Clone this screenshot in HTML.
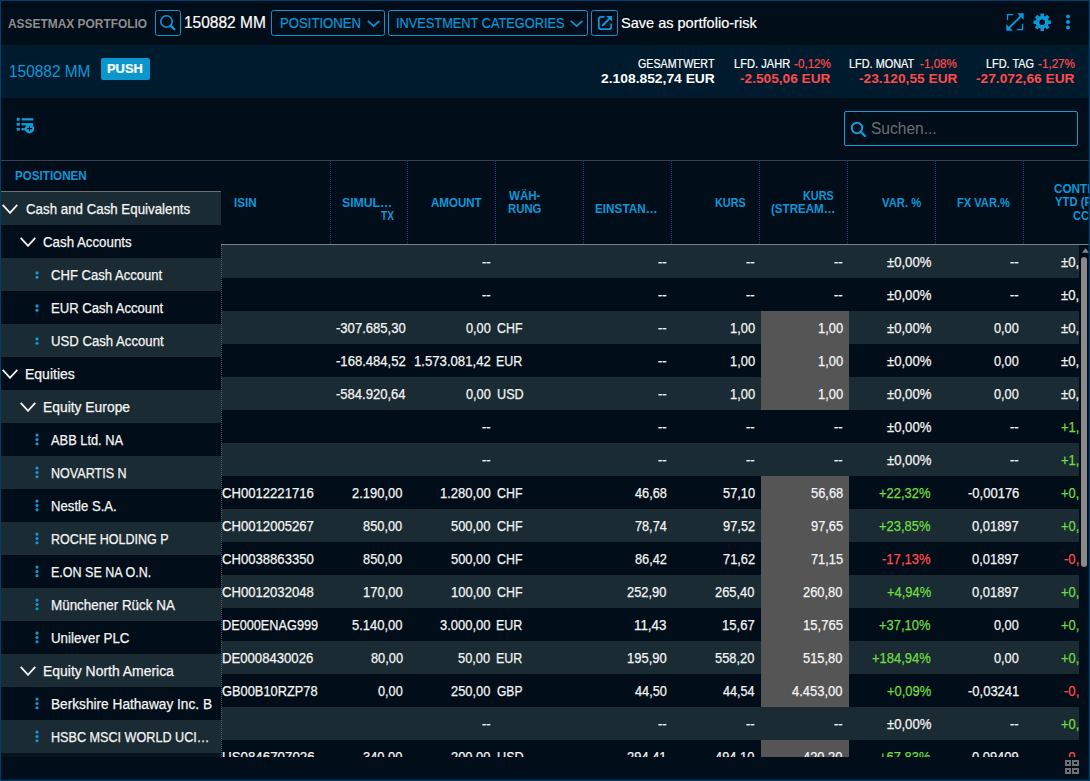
<!DOCTYPE html>
<html lang="de"><head><meta charset="utf-8"><title>Assetmax Portfolio</title>
<style>
*{box-sizing:border-box;margin:0;padding:0}
html,body{width:1090px;height:781px;overflow:hidden;background:#010d18}
body{font-family:"Liberation Sans",sans-serif;color:#f2f2f2;font-size:14px}
#app{position:relative;width:1090px;height:781px;background:#010d18;overflow:hidden}
#app:after{content:"";position:absolute;left:0;top:0;right:0;bottom:0;border:1px solid #003f6c;box-shadow:inset -1px -1px 0 rgba(0,63,108,.3);pointer-events:none;z-index:50}
.abs{position:absolute}
.t{position:absolute;white-space:pre;transform-origin:0 50%;display:block}
.white{color:#fff;-webkit-text-stroke:0.2px}
.blue{color:#0998d8}
.red{color:#ff4a4a}
.titlebar{position:absolute;left:1px;top:1px;width:1088px;height:44px;background:#010d18}
.wtitle{top:0.2px;line-height:45px;font-weight:700;color:#8e8e8e}
.btn{position:absolute;top:9px;height:26px;border:1px solid #0a93d2;border-radius:2.5px}
.btn .ic{position:absolute}
.btxt{top:0;line-height:25px;color:#0998d8;-webkit-text-stroke:0.2px}
.chev{position:absolute;top:9.2px}
.summary{position:absolute;left:1px;top:45px;width:1088px;height:53px;background:#011b2e}
.push{position:absolute;left:100px;top:13px;width:49px;height:22px;background:#0b96cd;border-radius:2px}
.kpi{position:absolute;left:0;top:0}
.k1{top:12px;line-height:15px;color:#fff;-webkit-text-stroke:0.2px}
.k2{top:24.6px;line-height:17px;font-weight:700;color:#fff}
.k1.red,.k2.red{color:#ff4a4a}
.toolbar{position:absolute;left:1px;top:98px;width:1088px;height:62px}
.search{position:absolute;left:843px;top:13px;width:234px;height:35px;border:1px solid #149bd3;border-radius:2px}
.ph{color:#6d6d6d}
.grid{position:absolute;left:1px;top:160px;width:1088px;height:597px;border-top:1px solid #36404f;overflow:hidden}
.pinned{position:absolute;left:0;top:0;width:220px;height:596px;overflow:hidden;z-index:3;background:#010d18}
.phead{position:relative;height:31px;border-bottom:1px solid #707070;font-weight:700;color:#0998d8}
.prow{position:relative;height:33px;line-height:33px}
.prow.alt,.mrow.alt{background:#1b2b33}
.ptxt{top:1px;color:#f4f4f4;-webkit-text-stroke:0.25px #f4f4f4}
.pchev{position:absolute;top:11.5px}
.pdots{position:absolute;left:33.5px}
.pstub{height:4px;background:#07131e}
.mhead{position:absolute;left:220px;top:0;width:868px;height:84px;border-bottom:1px solid #808080;overflow:hidden}
.sep{position:absolute;top:0;width:0;height:83px;border-left:1px dotted #0e4468}
.htxt{line-height:14px;font-weight:700;color:#0998d8}
.mbody{position:absolute;left:220px;top:84px;width:858px;height:512px;overflow:hidden}
.mbody:after{content:"";position:absolute;left:0;top:0;height:512px;width:0;border-left:1px dotted #4f5962}
.mrow{position:relative;height:33px;line-height:33px}
.c{top:1px;color:#f4f4f4;-webkit-text-stroke:0.25px}
.c.g{color:#6fdc42}
.c.r{color:#ff4a4a}
.hl{position:absolute;left:540px;top:0;width:88px;height:33px;background:#555}
.vscroll{position:absolute;left:1078px;top:84px;width:10px;height:512px;background:#010d18}
.thumb{position:absolute;left:2px;top:11.5px;width:6px;height:310px;border-radius:3px;background:#8a8a8a}
.footer{position:absolute;left:1px;top:757px;width:1088px;height:22px;background:#010d18}

</style></head>
<body>
<div id="app">
<div class="titlebar">
<span class="t wtitle" style="font-size:13px;left:7.30px;transform:scaleX(0.917);">ASSETMAX PORTFOLIO</span>
<div class="btn" style="left:154px;width:26px"><svg class="ic" style="left:3px;top:3px" width="18" height="18" viewBox="0 0 18 18"><circle cx="7.5" cy="7.5" r="5.7" fill="none" stroke="#0998d8" stroke-width="1.6"/><path d="M11.6 11.6 L15.4 15.3" stroke="#0998d8" stroke-width="2.2" stroke-linecap="round"/></svg></div>
<span class="t white" style="font-size:16px;left:183.31px;transform:scaleX(0.968);top:0;line-height:44px">150882 MM</span>
<div class="btn" style="left:270px;width:114px"><span class="t btxt" style="font-size:14px;left:7.73px;transform:scaleX(0.939);">POSITIONEN</span><svg class="chev" style="left:95px" width="14" height="8" viewBox="0 0 14 8"><path d="M0.8 0.8 L6.6 6.2 L12.4 0.8" fill="none" stroke="#0998d8" stroke-width="1.6"/></svg></div>
<div class="btn" style="left:387px;width:200px"><span class="t btxt" style="font-size:14px;left:7.31px;transform:scaleX(0.913);">INVESTMENT CATEGORIES</span><svg class="chev" style="left:181px" width="14" height="8" viewBox="0 0 14 8"><path d="M0.8 0.8 L6.6 6.2 L12.4 0.8" fill="none" stroke="#0998d8" stroke-width="1.6"/></svg></div>
<div class="btn" style="left:590px;width:27px"><svg class="ic" style="left:4px;top:3px" width="18" height="18" viewBox="0 0 18 18"><path d="M8.5 2.8 H5 a2.2 2.2 0 0 0 -2.2 2.2 V13 a2.2 2.2 0 0 0 2.2 2.2 H13 a2.2 2.2 0 0 0 2.2 -2.2 V9.5" fill="none" stroke="#0998d8" stroke-width="1.8"/><path d="M6.8 11.3 L13.5 4.6" stroke="#0998d8" stroke-width="2" stroke-linecap="round"/><path d="M10.2 2 H16 V7.8 Z" fill="#0998d8"/></svg></div>
<span class="t white" style="font-size:14.5px;left:620.07px;transform:scaleX(1.002);top:0;line-height:44px">Save as portfolio-risk</span>
<svg class="abs" style="left:1005px;top:12px" width="18" height="18" viewBox="0 0 18 18"><g fill="none" stroke="#0998d8"><path d="M1.5 7.2 V1.6 H7.2" stroke-width="1.3"/><path d="M16.6 10.8 V16.6 H10.8" stroke-width="1.3"/><path d="M2.5 15.5 L15.5 2.5" stroke-width="1.9"/></g><path d="M11.2 0.3 H17.7 V6.8 Z" fill="#0998d8"/><path d="M0.3 11.2 V17.7 H6.8 Z" fill="#0998d8"/></svg>
<svg class="abs" style="left:1031.8px;top:11.8px" width="18.4" height="18.4" viewBox="-9.5 -9.5 19 19"><path d="M-1.77 -6.46 L-1.79 -9.02 L1.79 -9.02 L1.77 -6.46 L3.32 -5.82 L5.11 -7.65 L7.65 -5.11 L5.82 -3.32 L6.46 -1.77 L9.02 -1.79 L9.02 1.79 L6.46 1.77 L5.82 3.32 L7.65 5.11 L5.11 7.65 L3.32 5.82 L1.77 6.46 L1.79 9.02 L-1.79 9.02 L-1.77 6.46 L-3.32 5.82 L-5.11 7.65 L-7.65 5.11 L-5.82 3.32 L-6.46 1.77 L-9.02 1.79 L-9.02 -1.79 L-6.46 -1.77 L-5.82 -3.32 L-7.65 -5.11 L-5.11 -7.65 L-3.32 -5.82 Z M2.9 0 A2.9 2.9 0 1 0 -2.9 0 A2.9 2.9 0 1 0 2.9 0 Z" fill="#0998d8" fill-rule="evenodd"/></svg>
<svg class="abs" style="left:1064px;top:13px" width="6" height="16" viewBox="0 0 6 16"><circle cx="3" cy="2.6" r="2" fill="#0998d8"/><circle cx="3" cy="8.1" r="2" fill="#0998d8"/><circle cx="3" cy="13.5" r="2" fill="#0998d8"/></svg>
</div>
<div class="summary">
<span class="t blue" style="font-size:16.5px;left:7.55px;transform:scaleX(0.935);top:-0.5px;line-height:53px">150882 MM</span>
<i class="push"></i><span class="t white" style="font-size:12px;left:106.14px;transform:scaleX(1.073);top:13.6px;line-height:21px;font-weight:700">PUSH</span>
<div class="kpi"><span class="t k1" style="font-size:12px;left:636.68px;transform:scaleX(0.891);">GESAMTWERT</span><span class="t k2" style="font-size:13.5px;left:599.70px;transform:scaleX(1.025);">2.108.852,74 EUR</span></div>
<div class="kpi"><span class="t k1" style="font-size:12px;left:732.96px;transform:scaleX(0.926);">LFD. JAHR</span><span class="t k1 red" style="font-size:12px;left:792.50px;transform:scaleX(0.973);">-0,12%</span><span class="t k2 red" style="font-size:13.5px;left:739.30px;transform:scaleX(1.012);">-2.505,06 EUR</span></div>
<div class="kpi"><span class="t k1" style="font-size:12px;left:848.26px;transform:scaleX(0.909);">LFD. MONAT</span><span class="t k1 red" style="font-size:12px;left:919.00px;transform:scaleX(0.973);">-1,08%</span><span class="t k2 red" style="font-size:13.5px;left:857.60px;transform:scaleX(1.018);">-23.120,55 EUR</span></div>
<div class="kpi"><span class="t k1" style="font-size:12px;left:984.66px;transform:scaleX(0.907);">LFD. TAG</span><span class="t k1 red" style="font-size:12px;left:1036.50px;transform:scaleX(0.973);">-1,27%</span><span class="t k2 red" style="font-size:13.5px;left:975.00px;transform:scaleX(1.018);">-27.072,66 EUR</span></div>
</div>
<div class="toolbar">
<svg class="abs" style="left:15px;top:17.6px" width="20" height="20" viewBox="0 0 20 20"><g fill="#0f9cd8"><rect x="0.7" y="1.8" width="3" height="3" rx=".6"/><rect x="0.7" y="6.7" width="3" height="3" rx=".6"/><rect x="0.7" y="11.7" width="3" height="3" rx=".6"/><rect x="5.6" y="2.2" width="11.7" height="2.3"/><rect x="5.6" y="7.1" width="11.7" height="2.3"/><rect x="5.6" y="12.1" width="4" height="2.3"/><circle cx="13.5" cy="12.7" r="4.7"/></g><path d="M13.5 10.2 V15.2 M11 12.7 H16" stroke="#010d18" stroke-width="1.2"/></svg>
<div class="search"><svg class="abs" style="left:5px;top:9px" width="17" height="17" viewBox="0 0 17 17"><circle cx="7" cy="7" r="5.2" fill="none" stroke="#149bd3" stroke-width="2"/><path d="M10.8 10.8 L15 15" stroke="#149bd3" stroke-width="2.4" stroke-linecap="round"/></svg><span class="t ph" style="font-size:16px;left:26.36px;transform:scaleX(0.971);top:0;line-height:33px">Suchen...</span></div>
</div>
<div class="grid">
<div class="pinned">
<div class="phead"><span class="t" style="font-size:12px;left:13.62px;transform:scaleX(0.969);top:1px;line-height:29px">POSITIONEN</span></div>
<div class="prow alt"><svg class="pchev" style="left:1.3px" width="16" height="10" viewBox="0 0 16 10"><path d="M0.7 0.9 L8 8.8 L15.3 0.9" fill="none" stroke="#f4f4f4" stroke-width="1.8"/></svg><span class="t ptxt" style="font-size:14px;left:24.90px;transform:scaleX(0.950);">Cash and Cash Equivalents</span></div>
<div class="prow"><svg class="pchev" style="left:18.5px" width="16" height="10" viewBox="0 0 16 10"><path d="M0.7 0.9 L8 8.8 L15.3 0.9" fill="none" stroke="#f4f4f4" stroke-width="1.8"/></svg><span class="t ptxt" style="font-size:14px;left:42.30px;transform:scaleX(0.949);">Cash Accounts</span></div>
<div class="prow alt"><svg class="pdots" style="top:12.5px" width="4" height="8" viewBox="0 0 4 8"><circle cx="2" cy="1.9" r="1.55" fill="#129bd2"/><circle cx="2" cy="6.2" r="1.55" fill="#129bd2"/></svg><span class="t ptxt" style="font-size:14px;left:50.30px;transform:scaleX(0.934);">CHF Cash Account</span></div>
<div class="prow"><svg class="pdots" style="top:12.5px" width="4" height="8" viewBox="0 0 4 8"><circle cx="2" cy="1.9" r="1.55" fill="#129bd2"/><circle cx="2" cy="6.2" r="1.55" fill="#129bd2"/></svg><span class="t ptxt" style="font-size:14px;left:49.83px;transform:scaleX(0.935);">EUR Cash Account</span></div>
<div class="prow alt"><svg class="pdots" style="top:12.5px" width="4" height="8" viewBox="0 0 4 8"><circle cx="2" cy="1.9" r="1.55" fill="#129bd2"/><circle cx="2" cy="6.2" r="1.55" fill="#129bd2"/></svg><span class="t ptxt" style="font-size:14px;left:49.90px;transform:scaleX(0.940);">USD Cash Account</span></div>
<div class="prow"><svg class="pchev" style="left:1.3px" width="16" height="10" viewBox="0 0 16 10"><path d="M0.7 0.9 L8 8.8 L15.3 0.9" fill="none" stroke="#f4f4f4" stroke-width="1.8"/></svg><span class="t ptxt" style="font-size:14px;left:24.35px;transform:scaleX(0.999);">Equities</span></div>
<div class="prow alt"><svg class="pchev" style="left:18.5px" width="16" height="10" viewBox="0 0 16 10"><path d="M0.7 0.9 L8 8.8 L15.3 0.9" fill="none" stroke="#f4f4f4" stroke-width="1.8"/></svg><span class="t ptxt" style="font-size:14px;left:41.75px;transform:scaleX(0.990);">Equity Europe</span></div>
<div class="prow"><svg class="pdots" style="top:10px" width="4" height="13" viewBox="0 0 4 13"><circle cx="2" cy="2.1" r="1.55" fill="#129bd2"/><circle cx="2" cy="6.5" r="1.55" fill="#129bd2"/><circle cx="2" cy="10.8" r="1.55" fill="#129bd2"/></svg><span class="t ptxt" style="font-size:14px;left:50.40px;transform:scaleX(0.917);">ABB Ltd. NA</span></div>
<div class="prow alt"><svg class="pdots" style="top:10px" width="4" height="13" viewBox="0 0 4 13"><circle cx="2" cy="2.1" r="1.55" fill="#129bd2"/><circle cx="2" cy="6.5" r="1.55" fill="#129bd2"/><circle cx="2" cy="10.8" r="1.55" fill="#129bd2"/></svg><span class="t ptxt" style="font-size:14px;left:49.87px;transform:scaleX(0.897);">NOVARTIS N</span></div>
<div class="prow"><svg class="pdots" style="top:10px" width="4" height="13" viewBox="0 0 4 13"><circle cx="2" cy="2.1" r="1.55" fill="#129bd2"/><circle cx="2" cy="6.5" r="1.55" fill="#129bd2"/><circle cx="2" cy="10.8" r="1.55" fill="#129bd2"/></svg><span class="t ptxt" style="font-size:14px;left:49.83px;transform:scaleX(0.939);">Nestle S.A.</span></div>
<div class="prow alt"><svg class="pdots" style="top:10px" width="4" height="13" viewBox="0 0 4 13"><circle cx="2" cy="2.1" r="1.55" fill="#129bd2"/><circle cx="2" cy="6.5" r="1.55" fill="#129bd2"/><circle cx="2" cy="10.8" r="1.55" fill="#129bd2"/></svg><span class="t ptxt" style="font-size:14px;left:49.87px;transform:scaleX(0.895);">ROCHE HOLDING P</span></div>
<div class="prow"><svg class="pdots" style="top:10px" width="4" height="13" viewBox="0 0 4 13"><circle cx="2" cy="2.1" r="1.55" fill="#129bd2"/><circle cx="2" cy="6.5" r="1.55" fill="#129bd2"/><circle cx="2" cy="10.8" r="1.55" fill="#129bd2"/></svg><span class="t ptxt" style="font-size:14px;left:49.87px;transform:scaleX(0.895);">E.ON SE NA O.N.</span></div>
<div class="prow alt"><svg class="pdots" style="top:10px" width="4" height="13" viewBox="0 0 4 13"><circle cx="2" cy="2.1" r="1.55" fill="#129bd2"/><circle cx="2" cy="6.5" r="1.55" fill="#129bd2"/><circle cx="2" cy="10.8" r="1.55" fill="#129bd2"/></svg><span class="t ptxt" style="font-size:14px;left:49.79px;transform:scaleX(0.959);">Münchener Rück NA</span></div>
<div class="prow"><svg class="pdots" style="top:10px" width="4" height="13" viewBox="0 0 4 13"><circle cx="2" cy="2.1" r="1.55" fill="#129bd2"/><circle cx="2" cy="6.5" r="1.55" fill="#129bd2"/><circle cx="2" cy="10.8" r="1.55" fill="#129bd2"/></svg><span class="t ptxt" style="font-size:14px;left:49.87px;transform:scaleX(0.951);">Unilever PLC</span></div>
<div class="prow alt"><svg class="pchev" style="left:18.5px" width="16" height="10" viewBox="0 0 16 10"><path d="M0.7 0.9 L8 8.8 L15.3 0.9" fill="none" stroke="#f4f4f4" stroke-width="1.8"/></svg><span class="t ptxt" style="font-size:14px;left:41.75px;transform:scaleX(0.995);">Equity North America</span></div>
<div class="prow"><svg class="pdots" style="top:10px" width="4" height="13" viewBox="0 0 4 13"><circle cx="2" cy="2.1" r="1.55" fill="#129bd2"/><circle cx="2" cy="6.5" r="1.55" fill="#129bd2"/><circle cx="2" cy="10.8" r="1.55" fill="#129bd2"/></svg><span class="t ptxt" style="font-size:14px;left:49.79px;transform:scaleX(0.976);">Berkshire Hathaway Inc. B</span></div>
<div class="prow alt"><svg class="pdots" style="top:10px" width="4" height="13" viewBox="0 0 4 13"><circle cx="2" cy="2.1" r="1.55" fill="#129bd2"/><circle cx="2" cy="6.5" r="1.55" fill="#129bd2"/><circle cx="2" cy="10.8" r="1.55" fill="#129bd2"/></svg><span class="t ptxt" style="font-size:14px;left:49.87px;transform:scaleX(0.901);">HSBC MSCI WORLD UCI…</span></div>
<div class="pstub"></div>
</div>
<div class="mhead">
<i class="sep" style="left:109px"></i><i class="sep" style="left:186px"></i><i class="sep" style="left:274px"></i><i class="sep" style="left:362px"></i><i class="sep" style="left:450px"></i><i class="sep" style="left:538px"></i><i class="sep" style="left:626px"></i><i class="sep" style="left:714px"></i><i class="sep" style="left:802px"></i>
<span class="t htxt" style="font-size:12.5px;left:13.08px;transform:scaleX(0.938);top:34.5px">ISIN</span>
<span class="t htxt" style="font-size:12.5px;left:121.02px;transform:scaleX(0.978);top:34.5px">SIMUL…</span>
<span class="t htxt" style="font-size:12.5px;left:160.00px;transform:scaleX(0.811);top:47.5px">TX</span>
<span class="t htxt" style="font-size:12.5px;left:209.50px;transform:scaleX(0.922);top:34.5px">AMOUNT</span>
<span class="t htxt" style="font-size:12.5px;left:288.00px;transform:scaleX(0.924);top:28px">WÄH-</span>
<span class="t htxt" style="font-size:12.5px;left:287.12px;transform:scaleX(0.908);top:41px">RUNG</span>
<span class="t htxt" style="font-size:12.5px;left:374.28px;transform:scaleX(0.940);top:41px">EINSTAN…</span>
<span class="t htxt" style="font-size:12.5px;left:493.86px;transform:scaleX(0.867);top:34.5px">KURS</span>
<span class="t htxt" style="font-size:12.5px;left:582.36px;transform:scaleX(0.867);top:28px">KURS</span>
<span class="t htxt" style="font-size:12.5px;left:550.48px;transform:scaleX(0.926);top:41px">(STREAM…</span>
<span class="t htxt" style="font-size:12.5px;left:661.00px;transform:scaleX(0.900);top:34.5px">VAR. %</span>
<span class="t htxt" style="font-size:12.5px;left:735.86px;transform:scaleX(0.889);top:34.5px">FX VAR.%</span>
<span class="t htxt" style="font-size:12.5px;left:833.30px;transform:scaleX(0.938);top:21px">CONTRIBUTION</span>
<span class="t htxt" style="font-size:12.5px;left:833.90px;transform:scaleX(0.901);top:34px">YTD (PORTFOLIO</span>
<span class="t htxt" style="font-size:12.5px;left:851.50px;transform:scaleX(0.886);top:47.5px">CCY)</span>
</div>
<div class="mbody">
<div class="mrow alt"><span class="t c" style="font-size:14px;left:261.00px;transform:scaleX(0.923);">--</span><span class="t c" style="font-size:14px;left:437.20px;transform:scaleX(0.923);">--</span><span class="t c" style="font-size:14px;left:525.20px;transform:scaleX(0.923);">--</span><span class="t c" style="font-size:14px;left:613.20px;transform:scaleX(0.923);">--</span><span class="t c" style="font-size:14px;left:665.68px;transform:scaleX(0.935);">±0,00%</span><span class="t c" style="font-size:14px;left:789.30px;transform:scaleX(0.923);">--</span><span class="t c" style="font-size:14px;left:840.48px;transform:scaleX(0.935);">±0,00%</span></div>
<div class="mrow"><span class="t c" style="font-size:14px;left:261.00px;transform:scaleX(0.923);">--</span><span class="t c" style="font-size:14px;left:437.20px;transform:scaleX(0.923);">--</span><span class="t c" style="font-size:14px;left:525.20px;transform:scaleX(0.923);">--</span><span class="t c" style="font-size:14px;left:613.20px;transform:scaleX(0.923);">--</span><span class="t c" style="font-size:14px;left:665.68px;transform:scaleX(0.935);">±0,00%</span><span class="t c" style="font-size:14px;left:789.30px;transform:scaleX(0.923);">--</span><span class="t c" style="font-size:14px;left:840.48px;transform:scaleX(0.935);">±0,00%</span></div>
<div class="mrow alt"><span class="t c" style="font-size:14px;left:115.31px;transform:scaleX(0.933);">-307.685,30</span><i class="hl"></i><span class="t c" style="font-size:14px;left:244.93px;transform:scaleX(0.907);">0,00</span><span class="t c" style="font-size:14px;left:275.94px;transform:scaleX(0.885);">CHF</span><span class="t c" style="font-size:14px;left:437.20px;transform:scaleX(0.923);">--</span><span class="t c" style="font-size:14px;left:508.67px;transform:scaleX(0.922);">1,00</span><span class="t c" style="font-size:14px;left:596.67px;transform:scaleX(0.922);">1,00</span><span class="t c" style="font-size:14px;left:665.68px;transform:scaleX(0.935);">±0,00%</span><span class="t c" style="font-size:14px;left:773.23px;transform:scaleX(0.907);">0,00</span><span class="t c" style="font-size:14px;left:840.48px;transform:scaleX(0.935);">±0,00%</span></div>
<div class="mrow"><span class="t c" style="font-size:14px;left:115.31px;transform:scaleX(0.934);">-168.484,52</span><i class="hl"></i><span class="t c" style="font-size:14px;left:192.89px;transform:scaleX(0.939);">1.573.081,42</span><span class="t c" style="font-size:14px;left:275.47px;transform:scaleX(0.890);">EUR</span><span class="t c" style="font-size:14px;left:437.20px;transform:scaleX(0.923);">--</span><span class="t c" style="font-size:14px;left:508.67px;transform:scaleX(0.922);">1,00</span><span class="t c" style="font-size:14px;left:596.67px;transform:scaleX(0.922);">1,00</span><span class="t c" style="font-size:14px;left:665.68px;transform:scaleX(0.935);">±0,00%</span><span class="t c" style="font-size:14px;left:773.23px;transform:scaleX(0.907);">0,00</span><span class="t c" style="font-size:14px;left:840.48px;transform:scaleX(0.935);">±0,00%</span></div>
<div class="mrow alt"><span class="t c" style="font-size:14px;left:115.31px;transform:scaleX(0.931);">-584.920,64</span><i class="hl"></i><span class="t c" style="font-size:14px;left:244.93px;transform:scaleX(0.907);">0,00</span><span class="t c" style="font-size:14px;left:275.54px;transform:scaleX(0.903);">USD</span><span class="t c" style="font-size:14px;left:437.20px;transform:scaleX(0.923);">--</span><span class="t c" style="font-size:14px;left:508.67px;transform:scaleX(0.922);">1,00</span><span class="t c" style="font-size:14px;left:596.67px;transform:scaleX(0.922);">1,00</span><span class="t c" style="font-size:14px;left:665.68px;transform:scaleX(0.935);">±0,00%</span><span class="t c" style="font-size:14px;left:773.23px;transform:scaleX(0.907);">0,00</span><span class="t c" style="font-size:14px;left:840.48px;transform:scaleX(0.935);">±0,00%</span></div>
<div class="mrow"><span class="t c" style="font-size:14px;left:261.00px;transform:scaleX(0.923);">--</span><span class="t c" style="font-size:14px;left:437.20px;transform:scaleX(0.923);">--</span><span class="t c" style="font-size:14px;left:525.20px;transform:scaleX(0.923);">--</span><span class="t c" style="font-size:14px;left:613.20px;transform:scaleX(0.923);">--</span><span class="t c" style="font-size:14px;left:665.68px;transform:scaleX(0.935);">±0,00%</span><span class="t c" style="font-size:14px;left:789.30px;transform:scaleX(0.923);">--</span><span class="t c g" style="font-size:14px;left:840.46px;transform:scaleX(0.923);">+1,84%</span></div>
<div class="mrow alt"><span class="t c" style="font-size:14px;left:261.00px;transform:scaleX(0.923);">--</span><span class="t c" style="font-size:14px;left:437.20px;transform:scaleX(0.923);">--</span><span class="t c" style="font-size:14px;left:525.20px;transform:scaleX(0.923);">--</span><span class="t c" style="font-size:14px;left:613.20px;transform:scaleX(0.923);">--</span><span class="t c" style="font-size:14px;left:665.68px;transform:scaleX(0.935);">±0,00%</span><span class="t c" style="font-size:14px;left:789.30px;transform:scaleX(0.923);">--</span><span class="t c g" style="font-size:14px;left:840.46px;transform:scaleX(0.923);">+1,84%</span></div>
<div class="mrow"><span class="t c" style="font-size:14px;left:1.30px;transform:scaleX(0.936);">CH0012221716</span><span class="t c" style="font-size:14px;left:131.20px;transform:scaleX(0.925);">2.190,00</span><i class="hl"></i><span class="t c" style="font-size:14px;left:218.66px;transform:scaleX(0.931);">1.280,00</span><span class="t c" style="font-size:14px;left:275.94px;transform:scaleX(0.885);">CHF</span><span class="t c" style="font-size:14px;left:413.78px;transform:scaleX(0.910);">46,68</span><span class="t c" style="font-size:14px;left:501.56px;transform:scaleX(0.916);">57,10</span><span class="t c" style="font-size:14px;left:589.56px;transform:scaleX(0.920);">56,68</span><span class="t c g" style="font-size:14px;left:658.31px;transform:scaleX(0.924);">+22,32%</span><span class="t c" style="font-size:14px;left:746.53px;transform:scaleX(0.929);">-0,00176</span><span class="t c g" style="font-size:14px;left:840.46px;transform:scaleX(0.923);">+0,28%</span></div>
<div class="mrow alt"><span class="t c" style="font-size:14px;left:1.30px;transform:scaleX(0.937);">CH0012005267</span><span class="t c" style="font-size:14px;left:142.31px;transform:scaleX(0.916);">850,00</span><i class="hl"></i><span class="t c" style="font-size:14px;left:230.01px;transform:scaleX(0.919);">500,00</span><span class="t c" style="font-size:14px;left:275.94px;transform:scaleX(0.885);">CHF</span><span class="t c" style="font-size:14px;left:413.72px;transform:scaleX(0.907);">78,74</span><span class="t c" style="font-size:14px;left:501.68px;transform:scaleX(0.919);">97,52</span><span class="t c" style="font-size:14px;left:589.68px;transform:scaleX(0.917);">97,65</span><span class="t c g" style="font-size:14px;left:658.31px;transform:scaleX(0.924);">+23,85%</span><span class="t c" style="font-size:14px;left:751.18px;transform:scaleX(0.923);">0,01897</span><span class="t c g" style="font-size:14px;left:840.46px;transform:scaleX(0.923);">+0,16%</span></div>
<div class="mrow"><span class="t c" style="font-size:14px;left:1.30px;transform:scaleX(0.936);">CH0038863350</span><span class="t c" style="font-size:14px;left:142.31px;transform:scaleX(0.916);">850,00</span><i class="hl"></i><span class="t c" style="font-size:14px;left:230.01px;transform:scaleX(0.919);">500,00</span><span class="t c" style="font-size:14px;left:275.94px;transform:scaleX(0.885);">CHF</span><span class="t c" style="font-size:14px;left:413.76px;transform:scaleX(0.912);">86,42</span><span class="t c" style="font-size:14px;left:501.72px;transform:scaleX(0.916);">71,62</span><span class="t c" style="font-size:14px;left:589.72px;transform:scaleX(0.915);">71,15</span><span class="t c r" style="font-size:14px;left:661.03px;transform:scaleX(0.933);">-17,13%</span><span class="t c" style="font-size:14px;left:751.18px;transform:scaleX(0.923);">0,01897</span><span class="t c r" style="font-size:14px;left:843.18px;transform:scaleX(0.934);">-0,12%</span></div>
<div class="mrow alt"><span class="t c" style="font-size:14px;left:1.30px;transform:scaleX(0.936);">CH0012032048</span><span class="t c" style="font-size:14px;left:141.87px;transform:scaleX(0.926);">170,00</span><i class="hl"></i><span class="t c" style="font-size:14px;left:229.77px;transform:scaleX(0.926);">100,00</span><span class="t c" style="font-size:14px;left:275.94px;transform:scaleX(0.885);">CHF</span><span class="t c" style="font-size:14px;left:406.37px;transform:scaleX(0.919);">252,90</span><span class="t c" style="font-size:14px;left:494.37px;transform:scaleX(0.919);">265,40</span><span class="t c" style="font-size:14px;left:582.37px;transform:scaleX(0.919);">260,80</span><span class="t c g" style="font-size:14px;left:665.66px;transform:scaleX(0.923);">+4,94%</span><span class="t c" style="font-size:14px;left:751.18px;transform:scaleX(0.923);">0,01897</span><span class="t c g" style="font-size:14px;left:840.46px;transform:scaleX(0.923);">+0,04%</span></div>
<div class="mrow"><span class="t c" style="font-size:14px;left:0.87px;transform:scaleX(0.908);">DE000ENAG999</span><span class="t c" style="font-size:14px;left:131.04px;transform:scaleX(0.928);">5.140,00</span><i class="hl"></i><span class="t c" style="font-size:14px;left:219.06px;transform:scaleX(0.927);">3.000,00</span><span class="t c" style="font-size:14px;left:275.47px;transform:scaleX(0.890);">EUR</span><span class="t c" style="font-size:14px;left:413.28px;transform:scaleX(0.954);">11,43</span><span class="t c" style="font-size:14px;left:501.28px;transform:scaleX(0.932);">15,67</span><span class="t c" style="font-size:14px;left:581.93px;transform:scaleX(0.932);">15,765</span><span class="t c g" style="font-size:14px;left:658.31px;transform:scaleX(0.924);">+37,10%</span><span class="t c" style="font-size:14px;left:773.23px;transform:scaleX(0.907);">0,00</span><span class="t c g" style="font-size:14px;left:840.46px;transform:scaleX(0.923);">+0,56%</span></div>
<div class="mrow alt"><span class="t c" style="font-size:14px;left:0.83px;transform:scaleX(0.938);">DE0008430026</span><span class="t c" style="font-size:14px;left:149.66px;transform:scaleX(0.913);">80,00</span><i class="hl"></i><span class="t c" style="font-size:14px;left:237.36px;transform:scaleX(0.916);">50,00</span><span class="t c" style="font-size:14px;left:275.47px;transform:scaleX(0.890);">EUR</span><span class="t c" style="font-size:14px;left:405.97px;transform:scaleX(0.926);">195,90</span><span class="t c" style="font-size:14px;left:494.21px;transform:scaleX(0.919);">558,20</span><span class="t c" style="font-size:14px;left:582.21px;transform:scaleX(0.919);">515,80</span><span class="t c g" style="font-size:14px;left:650.96px;transform:scaleX(0.927);">+184,94%</span><span class="t c" style="font-size:14px;left:773.23px;transform:scaleX(0.907);">0,00</span><span class="t c g" style="font-size:14px;left:840.46px;transform:scaleX(0.923);">+0,74%</span></div>
<div class="mrow"><span class="t c" style="font-size:14px;left:1.34px;transform:scaleX(0.917);">GB00B10RZP78</span><span class="t c" style="font-size:14px;left:157.03px;transform:scaleX(0.907);">0,00</span><i class="hl"></i><span class="t c" style="font-size:14px;left:230.17px;transform:scaleX(0.919);">250,00</span><span class="t c" style="font-size:14px;left:275.94px;transform:scaleX(0.860);">GBP</span><span class="t c" style="font-size:14px;left:413.78px;transform:scaleX(0.911);">44,50</span><span class="t c" style="font-size:14px;left:501.78px;transform:scaleX(0.903);">44,54</span><span class="t c" style="font-size:14px;left:571.36px;transform:scaleX(0.926);">4.453,00</span><span class="t c g" style="font-size:14px;left:665.66px;transform:scaleX(0.923);">+0,09%</span><span class="t c" style="font-size:14px;left:746.53px;transform:scaleX(0.928);">-0,03241</span><span class="t c r" style="font-size:14px;left:843.18px;transform:scaleX(0.934);">-0,02%</span></div>
<div class="mrow alt"><span class="t c" style="font-size:14px;left:261.00px;transform:scaleX(0.923);">--</span><span class="t c" style="font-size:14px;left:437.20px;transform:scaleX(0.923);">--</span><span class="t c" style="font-size:14px;left:525.20px;transform:scaleX(0.923);">--</span><span class="t c" style="font-size:14px;left:613.20px;transform:scaleX(0.923);">--</span><span class="t c" style="font-size:14px;left:665.68px;transform:scaleX(0.935);">±0,00%</span><span class="t c" style="font-size:14px;left:789.30px;transform:scaleX(0.923);">--</span><span class="t c g" style="font-size:14px;left:840.46px;transform:scaleX(0.923);">+0,36%</span></div>
<div class="mrow"><span class="t c" style="font-size:14px;left:0.87px;transform:scaleX(0.952);">US0846707026</span><span class="t c" style="font-size:14px;left:142.23px;transform:scaleX(0.920);">340,00</span><i class="hl"></i><span class="t c" style="font-size:14px;left:230.17px;transform:scaleX(0.919);">200,00</span><span class="t c" style="font-size:14px;left:275.54px;transform:scaleX(0.903);">USD</span><span class="t c" style="font-size:14px;left:406.37px;transform:scaleX(0.924);">294,41</span><span class="t c" style="font-size:14px;left:494.43px;transform:scaleX(0.918);">494,10</span><span class="t c" style="font-size:14px;left:582.43px;transform:scaleX(0.918);">420,20</span><span class="t c g" style="font-size:14px;left:658.31px;transform:scaleX(0.924);">+67,83%</span><span class="t c" style="font-size:14px;left:751.18px;transform:scaleX(0.922);">0,09409</span><span class="t c r" style="font-size:14px;left:843.18px;transform:scaleX(0.934);">-0,08%</span></div>
</div>
<div class="vscroll"><svg class="abs" style="left:2.5px;top:2.5px" width="7" height="5" viewBox="0 0 7 5"><path d="M0 4.8 L3.5 0.2 L7 4.8 Z" fill="#858585"/></svg><i class="thumb"></i></div>
</div>
<div class="footer"><svg class="abs" style="left:1064px;top:3px" width="14" height="14" viewBox="0 0 14 14"><g fill="none" stroke="#6e7072" stroke-width="2"><rect x="1" y="1" width="4" height="4"/><rect x="8" y="1" width="5" height="4"/><rect x="1" y="9" width="4" height="4"/><rect x="8" y="9" width="5" height="4"/></g></svg></div>
</div>
</body></html>
